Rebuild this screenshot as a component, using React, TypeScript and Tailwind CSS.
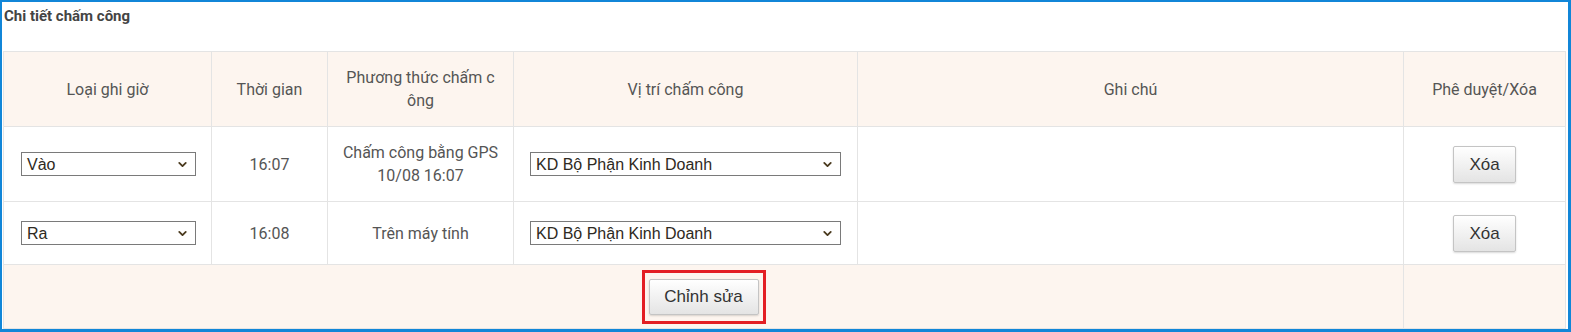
import { ChevronDown } from 'lucide-react';

const cell = 'border border-[#e4e4e4] text-center align-middle';

function Select({ value, width }: { value: string; width: string }) {
  return (
    <div
      className={`relative inline-flex h-[24px] items-center border border-[#7a7a7a] bg-white pl-[5px] text-left font-['Liberation_Sans',Arial,sans-serif] text-[16px] text-[#2e2a22] ${width}`}
    >
      <span>{value}</span>
      <ChevronDown
        className="absolute right-[6px] top-[5px] h-[13px] w-[13px] text-[#4a3a1e]"
        strokeWidth={3.4}
      />
    </div>
  );
}

function Button({ label, className = '' }: { label: string; className?: string }) {
  return (
    <button
      className={`rounded-[2px] border border-[#c4c4c4] bg-gradient-to-b from-white to-[#e4e4e4] font-['Liberation_Sans',Arial,sans-serif] text-[17px] text-[#333] shadow-[0_1px_2px_rgba(0,0,0,0.15)] ${className}`}
    >
      {label}
    </button>
  );
}

export default function App() {
  return (
    <div className="h-[332px] w-[1571px] border-b-[3px] border-l-2 border-r-[3px] border-t-2 border-[#1186d8] bg-white font-['Roboto',sans-serif] text-[#555]">
      <div className="flex h-[49px] items-start pl-[2px] pt-[3px] text-[15px] font-bold text-[#444]">
        Chi tiết chấm công
      </div>
      <table className="ml-px w-[1562px] table-fixed border-collapse text-[16px] leading-[23px]">
        <colgroup>
          <col className="w-[208px]" />
          <col className="w-[116px]" />
          <col className="w-[186px]" />
          <col className="w-[344px]" />
          <col className="w-[546px]" />
          <col className="w-[162px]" />
        </colgroup>
        <thead>
          <tr className="h-[75px] bg-[#fdf5ef]">
            <th className={`${cell} font-normal`}>Loại ghi giờ</th>
            <th className={`${cell} font-normal`}>Thời gian</th>
            <th className={`${cell} font-normal`}>
              Phương thức chấm c
              <br />
              ông
            </th>
            <th className={`${cell} font-normal`}>Vị trí chấm công</th>
            <th className={`${cell} font-normal`}>Ghi chú</th>
            <th className={`${cell} font-normal`}>Phê duyệt/Xóa</th>
          </tr>
        </thead>
        <tbody>
          <tr className="h-[75px]">
            <td className={`${cell} pr-[15px] pl-[17px]`}>
              <Select value="Vào" width="w-[175px]" />
            </td>
            <td className={cell}>16:07</td>
            <td className={cell}>
              Chấm công bằng GPS
              <br />
              10/08 16:07
            </td>
            <td className={`${cell} pl-[16px] text-left`}>
              <Select value="KD Bộ Phận Kinh Doanh" width="w-[311px]" />
            </td>
            <td className={cell}></td>
            <td className={cell}>
              <Button label="Xóa" className="h-[37px] w-[63px]" />
            </td>
          </tr>
          <tr className="h-[63px]">
            <td className={`${cell} pr-[15px] pl-[17px]`}>
              <Select value="Ra" width="w-[175px]" />
            </td>
            <td className={cell}>16:08</td>
            <td className={cell}>Trên máy tính</td>
            <td className={`${cell} pl-[16px] text-left`}>
              <Select value="KD Bộ Phận Kinh Doanh" width="w-[311px]" />
            </td>
            <td className={cell}></td>
            <td className={cell}>
              <Button label="Xóa" className="h-[37px] w-[63px]" />
            </td>
          </tr>
          <tr className="h-[64px] bg-[#fdf5ef]">
            <td className={cell} colSpan={5}>
              <div className="inline-flex border-[3px] border-[#e31e24] px-[4px] py-[6px]">
                <Button label="Chỉnh sửa" className="h-[36px] w-[110px]" />
              </div>
            </td>
            <td className={cell}></td>
          </tr>
        </tbody>
      </table>
    </div>
  );
}
